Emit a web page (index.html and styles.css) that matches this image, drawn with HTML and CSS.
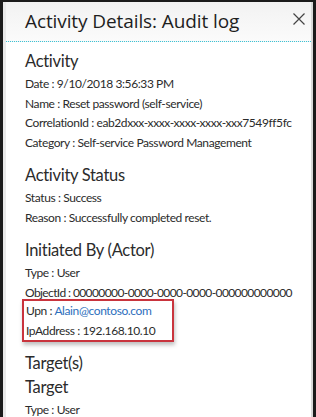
FILE: index.html
```html
<html>
 <head>
  <title>Activity Details: Audit log</title>
  <link rel="stylesheet" href="styles.css">
 </head>
 <body>
  <div class="blade">
   <div class="bladeHeader">
    <div class="bladeTitle">Activity Details: Audit log</div>
    <div class="closeBtn">
     <svg width="12" height="12" viewBox="0 0 12 12"><path d="M0.5 0.5 L11.5 11.5 M11.5 0.5 L0.5 11.5" stroke="#444" stroke-width="1.2" fill="none"/></svg>
    </div>
   </div>

   <div class="bladeContent">
    <div class="section">
     <div class="sectionTitle">Activity</div>
     <div class="row">Date : 9/10/2018 3:56:33 PM</div>
     <div class="row">Name : Reset password (self-service)</div>
     <div class="row">CorrelationId : eab2dxxx-xxxx-xxxx-xxxx-xxx7549ff5fc</div>
     <div class="row">Category : Self-service Password Management</div>
    </div>

    <div class="section">
     <div class="sectionTitle">Activity Status</div>
     <div class="row">Status : Success</div>
     <div class="row">Reason : Successfully completed reset.</div>
    </div>

    <div class="section">
     <div class="sectionTitle">Initiated By (Actor)</div>
     <div class="row">Type : User</div>
     <div class="row tight">ObjectId : 00000000-0000-0000-0000-000000000000</div>
     <div class="highlight">
      <div class="row">Upn : <a class="link">Alain@contoso.com</a></div>
      <div class="row">IpAddress : 192.168.10.10</div>
     </div>
    </div>

    <div class="section">
     <div class="sectionTitle">Target(s)</div>
     <div class="sectionTitle">Target</div>
     <div class="row">Type : User</div>
    </div>
   </div>
  </div>
 </body>
</html>
```

FILE: styles.css
```css
html, body{
    margin:0;
    padding:0;
    height:100%;
    background:#1b1b1b;
}

body{
    font-family:Lato,"Noto Sans",sans-serif;
    color:#333;
    overflow:hidden;
}

.blade{
    margin:2px 3px 0 3px;
    height:415px;
    background:#fff;
    border-left:3px solid #e9e9e9;
    border-right:2px solid #d9d9d9;
    box-sizing:border-box;
    overflow:hidden;
}

.bladeHeader{
    display:flex;
    align-items:flex-start;
    justify-content:space-between;
    height:40px;
    padding:6px 0 0 19px;
    box-sizing:border-box;
    background:linear-gradient(#f2f2f2, #fbfbfb);
    border-bottom:1px dotted #3cc4d6;
}

.bladeTitle{
    font-family:"Open Sans","Noto Sans",sans-serif;
    font-size:19px;
    font-weight:500;
    color:#1e1e1e;
    letter-spacing:-0.1px;
}

.closeBtn{
    padding:5px 6px 0 0;
}

.bladeContent{
    padding:8px 0 0 19px;
}

.section{
    margin-bottom:12px;
}

.sectionTitle{
    font-size:16.5px;
    line-height:23px;
    color:#2b2b2b;
    letter-spacing:-0.3px;
    margin-bottom:1px;
}

.row{
    font-size:12px;
    line-height:19.5px;
    color:#2b2b2b;
    letter-spacing:-0.4px;
    white-space:nowrap;
}

.row.tight{
    letter-spacing:-0.6px;
}

.link{
    color:#2e6fbd;
}

.highlight{
    display:inline-block;
    margin:-3px 0 -2px -3px;
    padding:0 17px 0 2px;
    border:2px solid #c9343d;
    box-shadow:1px 3px 4px rgba(0,0,0,.25);
}
```
